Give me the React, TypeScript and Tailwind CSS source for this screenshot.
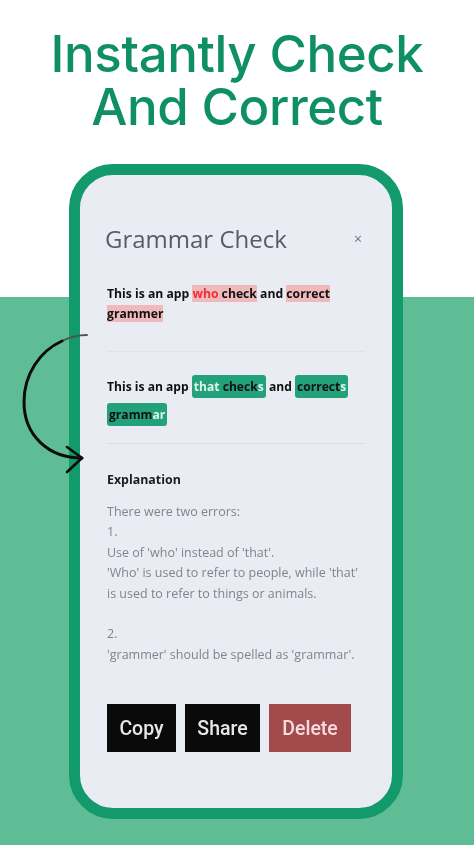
export default function App() {
  return (
    <div className="relative w-[474px] h-[845px] overflow-hidden bg-[linear-gradient(to_bottom,#ffffff_297px,#5fbd96_297px)] flex flex-col items-center pt-[27px] font-['Open_Sans',sans-serif] blur-[0.6px]">
      <h1 className="font-['Inter',sans-serif] font-medium text-[51px] leading-[53px] tracking-[-0.4px] text-[#0f8f64] text-center">
        Instantly Check
        <br />
        And Correct
      </h1>
      <div className="mt-[31px] ml-[-2px] w-[334px] h-[655px] rounded-[44px] border-[11px] border-[#129a6c] bg-[#e9edf3] pl-[25px] pr-[27px] pt-[46px]">
        <div className="flex items-center justify-between pr-[2px]">
          <h2 className="text-[24px] leading-[36px] text-[#565b66]">Grammar Check</h2>
          <span className="text-[14px] leading-none text-[#6b7280] mr-[1px]">×</span>
        </div>
        <div className="pl-[2px]">
          <p className="mt-[27px] text-[12.2px] leading-[20px] font-bold text-[#111111] pb-[27px] border-b border-[#dfe3ea]">
            This is an app <span className="bg-[#f0b9bb]"><span className="text-[#ef3035]">who</span> check</span> and <span className="bg-[#f0b9bb]">correct grammer</span>
          </p>
          <p className="mt-[21px] text-[12.1px] leading-[28px] font-bold text-[#111111] pb-[14px] border-b border-[#d8dce3]">
            This is an app <span className="bg-[#22a17b] rounded-[3px] px-[2px] py-[3px]"><span className="text-[#dff5ec]">that</span> check<span className="text-[#dff5ec]">s</span></span> and <span className="bg-[#22a17b] rounded-[3px] px-[2px] py-[3px]">correct<span className="text-[#dff5ec]">s</span></span>{" "}
            <span className="bg-[#22a17b] rounded-[3px] px-[2px] py-[3px]">gramm<span className="text-[#dff5ec]">ar</span></span>
          </p>
          <h3 className="mt-[26px] text-[12.4px] leading-[20px] font-bold text-[#1c1c1c]">Explanation</h3>
          <div className="mt-[12px] text-[12.5px] leading-[20.4px] text-[#80848c]">
            <p>There were two errors:</p>
            <p>1.</p>
            <p>Use of 'who' instead of 'that'.</p>
            <p>'Who' is used to refer to people, while 'that'</p>
            <p>is used to refer to things or animals.</p>
            <p className="mt-[20.4px]">2.</p>
            <p>'grammer' should be spelled as 'grammar'.</p>
          </div>
          <div className="mt-[39px] flex gap-[9px] font-['Roboto',sans-serif] font-medium text-[19.5px] text-center">
            <button className="w-[69px] h-[48px] bg-[#0a0a0a] text-[#e8e8e8]">Copy</button>
            <button className="w-[75px] h-[48px] bg-[#0a0a0a] text-[#e8e8e8]">Share</button>
            <button className="w-[82px] h-[48px] bg-[#a34a4c] text-[#f6dcdc]">Delete</button>
          </div>
        </div>
      </div>
      <svg className="absolute left-[18px] top-[330px]" width="74" height="145" viewBox="0 0 74 145" fill="none" stroke="#0c0c0c" strokeLinecap="round" strokeLinejoin="round">
        <path d="M69 5 C60 5 52 7 44 11" stroke="#4b5550" strokeWidth="1.8" />
        <path d="M44 11 C22 21 6 44 6 72 C6 105 30 128 64 128" strokeWidth="3" />
        <path d="M49 117 L64 128 L49 142" strokeWidth="2.6" />
      </svg>
    </div>
  );
}
